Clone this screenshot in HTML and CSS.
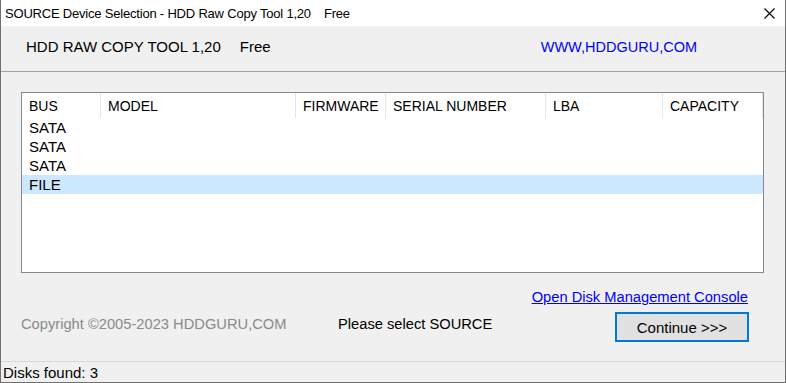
FILE: index.html
```html
<!DOCTYPE html>
<html>
<head>
  <title>SOURCE Device Selection</title>
  <link rel="stylesheet" href="styles.css">
</head>
<body>
  <div class="window">
    <div class="titlebar">
      <span class="title">SOURCE Device Selection - HDD Raw Copy Tool 1,20</span>
      <span class="title-free">Free</span>
      <span class="close">
        <svg width="11" height="11" viewBox="0 0 11 11"><path d="M0.5 0.5 L10.5 10.5 M10.5 0.5 L0.5 10.5" stroke="#000" stroke-width="1.1" fill="none"/></svg>
      </span>
    </div>
    <div class="header">
      <span class="app-name">HDD RAW COPY TOOL 1,20</span>
      <span class="app-free">Free</span>
      <span class="site">WWW,HDDGURU,COM</span>
    </div>
    <div class="content">
      <div class="list">
        <div class="row head">
          <div class="c bus">BUS</div>
          <div class="c model">MODEL</div>
          <div class="c fw">FIRMWARE</div>
          <div class="c sn">SERIAL NUMBER</div>
          <div class="c lba">LBA</div>
          <div class="c cap">CAPACITY</div>
        </div>
        <div class="row"><div class="c bus">SATA</div></div>
        <div class="row"><div class="c bus">SATA</div></div>
        <div class="row"><div class="c bus">SATA</div></div>
        <div class="row selected"><div class="c bus">FILE</div></div>
      </div>
      <div class="link-row">
        <a href="#" class="link">Open Disk Management Console</a>
      </div>
      <div class="action-row">
        <span class="copyright">Copyright ©2005-2023 HDDGURU,COM</span>
        <span class="prompt">Please select SOURCE</span>
        <button class="continue">Continue &gt;&gt;&gt;</button>
      </div>
    </div>
    <div class="status">Disks found: 3</div>
  </div>
</body>
</html>
```

FILE: styles.css
```css
body {
  margin: 0;
  padding: 0;
  font-family: "Liberation Sans", Arial, sans-serif;
  font-size: 15px;
  color: #000;
}

.window {
  width: 786px;
  height: 383px;
  box-sizing: border-box;
  border: 1px solid #707070;
  border-top: none;
  background-color: #f0f0f0;
  display: flex;
  flex-direction: column;
}

.titlebar {
  height: 26px;
  background-color: #fff;
  display: flex;
  align-items: center;
  padding-left: 4px;
  padding-right: 10px;
  font-size: 13px;
  letter-spacing: -0.2px;
}
.title-free {
  margin-left: 13px;
}
.close {
  margin-left: auto;
  display: flex;
}

.header {
  height: 46px;
  box-sizing: border-box;
  padding-bottom: 4px;
  border-bottom: 1px solid #a0a0a0;
  display: flex;
  align-items: center;
  padding-left: 25px;
  font-size: 15px;
}
.app-free {
  margin-left: 19px;
}
.site {
  margin-left: auto;
  margin-right: 88px;
  color: #0000ff;
  font-size: 14.5px;
}

.content {
  flex: 1;
  padding: 20px 0 0 20px;
  display: flex;
  flex-direction: column;
}

.list {
  width: 743px;
  height: 181px;
  box-sizing: border-box;
  border: 1px solid #828790;
  background-color: #fff;
  font-size: 15px;
}
.row {
  display: flex;
  height: 19px;
  align-items: center;
}
.row.head {
  height: 25px;
  font-size: 14px;
}
.row.selected {
  background-color: #cce8ff;
}
.c {
  box-sizing: border-box;
  padding-left: 7px;
  height: 100%;
  display: flex;
  align-items: center;
}
.head .c {
  border-right: 1px solid #e5e5e5;
}
.bus { width: 79px; }
.model { width: 195px; }
.fw { width: 90px; }
.sn { width: 160px; }
.lba { width: 117px; }
.cap { width: 100px; }

.link-row {
  display: flex;
  justify-content: flex-end;
  padding-right: 37px;
  margin-top: 16px;
  font-size: 14.7px;
}
.link {
  color: #0000ff;
  text-decoration: underline;
}

.action-row {
  display: flex;
  align-items: flex-start;
  margin-top: 7px;
  font-size: 14.7px;
}
.copyright {
  color: #8a8a8a;
  width: 317px;
  margin-top: 4px;
}
.prompt {
  width: 277px;
  margin-top: 4px;
}
.continue {
  width: 134px;
  height: 30px;
  border: 2px solid #0078d7;
  background-color: #e1e1e1;
  font-family: "Liberation Sans", Arial, sans-serif;
  font-size: 15px;
  color: #000;
  padding: 0;
}

.status {
  height: 20px;
  border-top: 1px solid #d7d7d7;
  padding-left: 2px;
  display: flex;
  align-items: center;
  background-color: #f0f0f0;
}
```
